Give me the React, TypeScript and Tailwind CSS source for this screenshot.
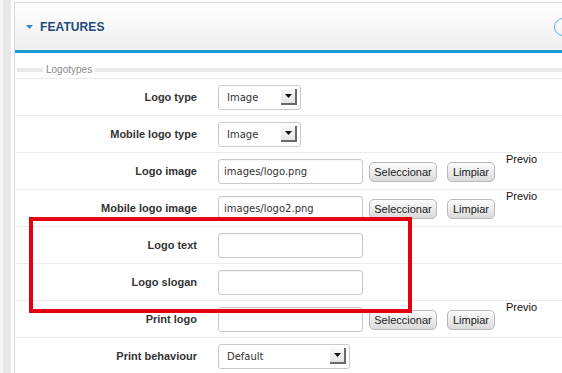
import React from "react";

const SelectArrow = () => (
  <div className="absolute right-[3px] top-1/2 -translate-y-1/2 w-[16px] h-[16px] bg-gradient-to-b from-[#fafafa] to-[#e4e4e4] border-r-[2px] border-b-[2px] border-[#6a6a6a] flex items-center justify-center">
    <svg width="7" height="4" viewBox="0 0 7 4">
      <polygon points="0,0 7,0 3.5,4" fill="#111" />
    </svg>
  </div>
);

const Select = ({ value, w }: { value: string; w: string }) => (
  <div
    className={`relative ${w} h-[25px] border border-[#c9c9c9] rounded-[3px] bg-white flex items-center pl-[8px] text-[10px] text-[#333] font-['DejaVu_Sans',sans-serif]`}
  >
    {value}
    <SelectArrow />
  </div>
);

const Input = ({ value }: { value?: string }) => (
  <div className="w-[145px] h-[25px] border border-[#c9c9c9] rounded-[3px] bg-white flex items-center pl-[5px] text-[10px] text-[#333] font-['DejaVu_Sans',sans-serif] shadow-[inset_0_1px_1px_rgba(0,0,0,0.04)]">
    {value}
  </div>
);

const Btn = ({ label, w }: { label: string; w: string }) => (
  <div
    className={`${w} h-[20px] mt-[2px] rounded-[5px] border border-[#b9b9b9] bg-gradient-to-b from-[#fcfcfc] to-[#dadada] flex items-center justify-center text-[11px] text-[#1a1a1a]`}
  >
    {label}
  </div>
);

const FileRow = ({ value }: { value?: string }) => (
  <div className="flex items-center h-full">
    <Input value={value} />
    <div className="ml-[6px]">
      <Btn label="Seleccionar" w="w-[68px]" />
    </div>
    <div className="ml-[10px]">
      <Btn label="Limpiar" w="w-[48px]" />
    </div>
    <div className="ml-[11px] self-start text-[11px] leading-[13px] text-[#111]">Previo</div>
  </div>
);

const Row = ({ label, children }: { label: string; children: React.ReactNode }) => (
  <div className="flex items-center h-[37px] border-b border-[#ececec]">
    <div className="w-[181px] text-right text-[11px] font-bold text-[#333] shrink-0">{label}</div>
    <div className="ml-[21px] h-full flex items-center">{children}</div>
  </div>
);

export default function App() {
  return (
    <div className="relative w-[562px] h-[373px] overflow-hidden bg-white flex font-['Liberation_Sans',Arial,sans-serif]">
      <div className="w-[3px] shrink-0 bg-[#f6f6f6]" />
      <div className="w-[8px] shrink-0 bg-[#e8e8e8]" />
      <div className="w-[3px] shrink-0 bg-white" />
      <div className="w-[559px] shrink-0 mt-[2px] border-l border-t border-r border-[#d9d9d9] bg-white">
        <div className="h-[47px] bg-gradient-to-b from-white to-[#eeeeee] flex items-center pl-[11px]">
          <svg width="7" height="4" viewBox="0 0 7 4">
            <polygon points="0,0 7,0 3.5,4" fill="#2b8fc6" />
          </svg>
          <span className="ml-[7px] text-[12px] font-bold text-[#1e4b78] tracking-[0.1px]">FEATURES</span>
          <div className="ml-auto w-[18px] h-[18px] rounded-full border-[1.5px] border-[#5fb0dc] bg-gradient-to-b from-white to-[#f0f0f0]" />
        </div>
        <div className="h-[3px] bg-[#1a9ad8]" />
        <div className="pl-[1px]">
          <div className="mt-[12px] h-[10px] flex items-center">
            <div className="ml-[1px] w-[26px] h-[4px] bg-[#e9e9e9]" />
            <span className="px-[3px] text-[10px] leading-[10px] text-[#8a8a8a]">Logotypes</span>
            <div className="flex-1 h-[4px] bg-[#e9e9e9]" />
          </div>
          <div className="mt-[3px] border-t border-[#ececec]" />
          <Row label="Logo type">
            <Select value="Image" w="w-[83px]" />
          </Row>
          <Row label="Mobile logo type">
            <Select value="Image" w="w-[83px]" />
          </Row>
          <Row label="Logo image">
            <FileRow value="images/logo.png" />
          </Row>
          <Row label="Mobile logo image">
            <FileRow value="images/logo2.png" />
          </Row>
          <Row label="Logo text">
            <Input />
          </Row>
          <Row label="Logo slogan">
            <Input />
          </Row>
          <Row label="Print logo">
            <FileRow />
          </Row>
          <Row label="Print behaviour">
            <Select value="Default" w="w-[132px]" />
          </Row>
        </div>
      </div>
      <div className="absolute left-[29px] top-[217px] w-[383px] h-[96px] border-[4px] border-[#e3000f]" />
    </div>
  );
}
